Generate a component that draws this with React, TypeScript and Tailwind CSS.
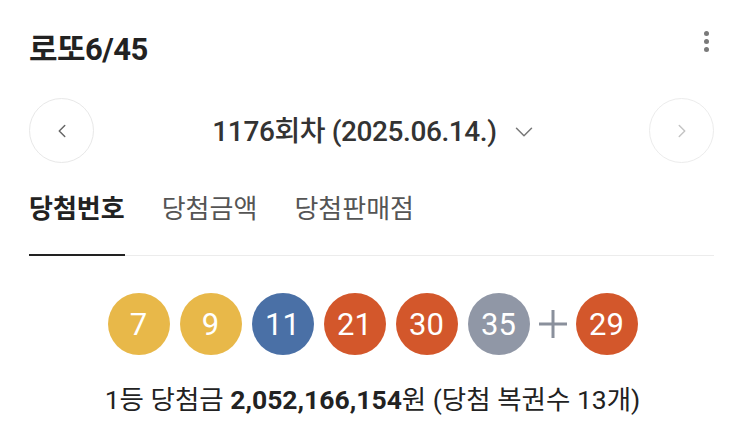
import { ChevronLeft, ChevronRight, ChevronDown } from "lucide-react";

const font = { fontFamily: '"Roboto", "Noto Sans CJK KR", sans-serif' };

const balls = [
  { n: 7, c: "bg-[#e8b849]" },
  { n: 9, c: "bg-[#e8b849]" },
  { n: 11, c: "bg-[#4a70a6]" },
  { n: 21, c: "bg-[#d3572b]" },
  { n: 30, c: "bg-[#d3572b]" },
  { n: 35, c: "bg-[#9097a6]" },
];

const Ball = ({ n, c }: { n: number; c: string }) => (
  <div className={`w-[62px] h-[62px] rounded-full ${c} flex items-center justify-center text-white text-[31px] leading-none`}>
    {n}
  </div>
);

export default function App() {
  return (
    <div className="w-[743px] h-[437px] bg-white text-[#222] overflow-hidden" style={font}>
      {/* Header */}
      <div className="flex items-center justify-between pl-[29px] pr-[34px] pt-[28px] h-[70px]">
        <h1 className="text-[31px] font-bold tracking-[-0.5px] leading-none">로또6/45</h1>
        <div className="flex flex-col gap-[3px] items-center mt-[-16px]">
          <span className="w-[5px] h-[5px] rounded-full bg-[#7a7a7a]" />
          <span className="w-[5px] h-[5px] rounded-full bg-[#7a7a7a]" />
          <span className="w-[5px] h-[5px] rounded-full bg-[#7a7a7a]" />
        </div>
      </div>

      {/* Round selector */}
      <div className="flex items-center justify-between px-[29px] mt-[28px]">
        <button className="w-[65px] h-[65px] rounded-full border border-[#e8e8e8] flex items-center justify-center text-[#666]">
          <ChevronLeft size={22} strokeWidth={1.6} />
        </button>
        <div className="flex items-center gap-[12px] ml-[8px] mt-[2px]">
          <span className="text-[28px] font-medium tracking-[-0.4px] leading-none text-[#333]">1176회차 (2025.06.14.)</span>
          <ChevronDown size={30} strokeWidth={1.2} className="text-[#777]" />
        </div>
        <button className="w-[65px] h-[65px] rounded-full border border-[#ececec] flex items-center justify-center text-[#c4c4c4]">
          <ChevronRight size={22} strokeWidth={1.6} />
        </button>
      </div>

      {/* Tabs */}
      <div className="mx-[29px] mt-[31px] border-b border-[#ececec] flex gap-[37px]">
        <div className="text-[26px] font-bold leading-none pt-[2px] pb-[32px] border-b-2 border-[#222] mb-[-1px]">당첨번호</div>
        <div className="text-[26px] leading-none pt-[2px] pb-[32px] text-[#555]">당첨금액</div>
        <div className="text-[26px] leading-none pt-[2px] pb-[32px] text-[#555]">당첨판매점</div>
      </div>

      {/* Balls */}
      <div className="flex items-center justify-center gap-[10px] mt-[37px] ml-[2px]">
        {balls.map((b) => (
          <Ball key={b.n} n={b.n} c={b.c} />
        ))}
        <svg width="30" height="30" viewBox="0 0 30 30" className="mx-[-2px]">
          <path d="M15 1v28M1 15h28" stroke="#8a909c" strokeWidth="3" />
        </svg>
        <Ball n={29} c="bg-[#d3572b]" />
      </div>

      {/* Prize */}
      <div className="text-center mt-[32px] text-[26.5px] leading-none text-[#222] ml-[2px]">
        1등 당첨금 <span className="font-bold">2,052,166,154</span>원 (당첨 복권수 13개)
      </div>
    </div>
  );
}
